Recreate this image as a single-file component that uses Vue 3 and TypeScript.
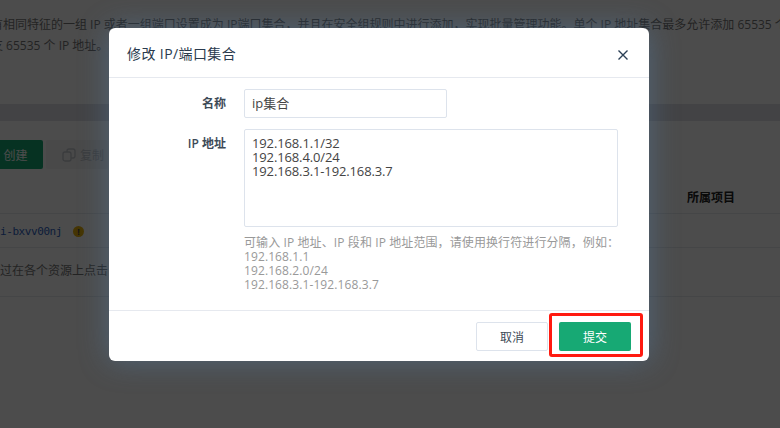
<script setup lang="ts">
const ipText = "192.168.1.1/32\n192.168.4.0/24\n192.168.3.1-192.168.3.7";
const hints = ["192.168.1.1", "192.168.2.0/24", "192.168.3.1-192.168.3.7"];
</script>

<template>
  <div class="screen">
    <div class="page">
      <div class="desc">
        <p class="line-one">有相同特征的一组 IP 或者一组端口设置成为 IP端口集合，并且在安全组规则中进行添加，实现批量管理功能。单个 IP 地址集合最多允许添加 65535 个</p>
        <p class="line-two">支 65535 个 IP 地址。</p>
      </div>
      <div class="strip"></div>
      <div class="toolbar">
        <button class="create">创建</button>
        <button class="copy">
          <svg width="14" height="14" viewBox="0 0 14 14" fill="none" stroke="currentColor" stroke-width="1.3">
            <rect x="1" y="4" width="8" height="9" rx="2" />
            <path d="M5 4V3a2 2 0 0 1 2-2h4a2 2 0 0 1 2 2v5a2 2 0 0 1-2 2H9" />
          </svg>
          复制
        </button>
      </div>
      <div class="thead"><span class="th-project">所属项目</span></div>
      <div class="row-id">
        <span class="mono">i-bxvv00nj</span>
        <span class="warn">!</span>
      </div>
      <div class="row-tip">过在各个资源上点击</div>
    </div>

    <div class="overlay">
      <div class="modal">
        <header class="modal-head">
          <h2>修改 IP/端口集合</h2>
          <svg class="close" width="10" height="10" viewBox="0 0 10 10" stroke="#2a3f55" stroke-width="1.4">
            <path d="M.5.5l9 9M9.5.5l-9 9" />
          </svg>
        </header>
        <div class="modal-body">
          <div class="field">
            <label>名称</label>
            <div class="input">ip集合</div>
          </div>
          <div class="field field-ip">
            <label>IP 地址</label>
            <div class="ip-col">
              <div class="textarea">{{ ipText }}</div>
              <div class="hint">
                <div>可输入 IP 地址、IP 段和 IP 地址范围，请使用换行符进行分隔，例如：</div>
                <div v-for="h in hints" :key="h">{{ h }}</div>
              </div>
            </div>
          </div>
        </div>
        <footer class="modal-foot">
          <button class="cancel">取消</button>
          <span class="submit-mark"><button class="submit">提交</button></span>
        </footer>
      </div>
    </div>
  </div>
</template>

<style scoped>
.screen {
  position: relative;
  width: 780px;
  height: 428px;
  overflow: hidden;
  font-family: "Open Sans", "Noto Sans CJK SC", sans-serif;
  font-size: 12px;
  color: #333;
  background: #fff;
}
.page {
  height: 428px;
}
.desc {
  height: 104px;
  padding-top: 16px;
  box-sizing: border-box;
  white-space: nowrap;
  overflow: hidden;
}
.desc p {
  margin: 0 0 3px;
  line-height: 18px;
  font-size: 12px;
  color: #777;
}
.line-one {
  margin-left: -9px !important;
}
.line-two {
  margin-left: -9px !important;
}
.strip {
  height: 17px;
  background: #e0e2e6;
}
.toolbar {
  display: flex;
  gap: 3px;
  padding-top: 19px;
  height: 29px;
  margin-left: -20px;
}
.toolbar button {
  height: 29px;
  border: 0;
  border-radius: 2px;
  font: inherit;
  display: flex;
  align-items: center;
  justify-content: center;
  gap: 4px;
  white-space: nowrap;
}
.create {
  width: 63px;
  padding-left: 14px;
  background: #17a974;
  color: #fff;
}
.toolbar .copy {
  width: 62px;
  padding: 0 0 0 16px;
  justify-content: flex-start;
  background: #f3f4f6;
  color: #c3c7cc;
}
.thead {
  height: 45px;
  box-sizing: border-box;
  border-bottom: 1px solid #e8eaee;
  padding-top: 20px;
  padding-left: 687px;
  font-weight: 600;
  color: #222;
  line-height: 18px;
}
.row-id {
  height: 34px;
  box-sizing: border-box;
  border-bottom: 1px solid #e8eaee;
  display: flex;
  align-items: center;
  gap: 11px;
  padding-top: 2px;
}
.mono {
  font-family: "DejaVu Sans Mono", monospace;
  font-size: 11px;
  letter-spacing: -0.42px;
  color: #2d5fbf;
}
.warn {
  width: 11px;
  height: 11px;
  border-radius: 50%;
  background: #e8b10c;
  color: #4c4c4c;
  font-size: 9px;
  line-height: 11px;
  font-weight: 700;
  text-align: center;
}
.row-tip {
  height: 49px;
  box-sizing: border-box;
  border-bottom: 1px solid #e8eaee;
  padding-top: 14px;
  line-height: 18px;
  color: #777;
}
.overlay {
  position: absolute;
  inset: 0;
  background: rgba(0, 0, 0, 0.7);
  padding: 28px 0 0 109px;
  box-sizing: border-box;
}
.modal {
  width: 540px;
  height: 333px;
  background: #fff;
  border-radius: 6px;
  box-shadow: 0 0 30px rgba(88, 130, 172, 0.48);
  display: flex;
  flex-direction: column;
}
.modal-head {
  height: 50px;
  box-sizing: border-box;
  border-bottom: 1px solid #e6e9ef;
  display: flex;
  align-items: center;
  justify-content: space-between;
  padding: 0 21px 0 18px;
}
.modal-head h2 {
  margin: 0;
  font-size: 14px;
  font-weight: 400;
  letter-spacing: 0.4px;
  color: #2a3a4d;
}
.close {
  margin-top: 4px;
}
.modal-body {
  flex: 1;
  padding-top: 11px;
}
.field {
  display: flex;
  gap: 18px;
}
.field label {
  width: 117px;
  text-align: right;
  font-size: 12px;
  font-weight: 600;
  color: #3d4a57;
  line-height: 29px;
}
.input {
  width: 203px;
  height: 29px;
  box-sizing: border-box;
  border: 1px solid #dde3ec;
  border-radius: 2px;
  padding: 0 7px;
  line-height: 27px;
  color: #444;
  font-size: 13px;
}
.field-ip {
  margin-top: 11px;
}
.ip-col {
  width: 374px;
}
.textarea {
  height: 98px;
  box-sizing: border-box;
  border: 1px solid #dde3ec;
  border-radius: 2px;
  padding: 6px 7px;
  font-size: 13px;
  line-height: 14px;
  letter-spacing: -0.13px;
  color: #444;
  white-space: pre;
}
.hint {
  margin-top: 9px;
  font-size: 12px;
  line-height: 14px;
  letter-spacing: 0.1px;
  color: #999;
  white-space: nowrap;
}
.modal-foot {
  height: 51px;
  box-sizing: border-box;
  border-top: 1px solid #e6e9ef;
  display: flex;
  justify-content: flex-end;
  align-items: flex-start;
  padding: 11px 18px 0 0;
  gap: 11px;
}
.modal-foot button {
  width: 72px;
  height: 29px;
  border-radius: 2px;
  font: inherit;
  font-size: 12px;
}
.cancel {
  background: #fff;
  border: 1px solid #dde3ec;
  color: #3d4a57;
}
.submit {
  background: #17a974;
  border: 0;
  color: #fff;
  display: block;
}
.submit-mark {
  display: block;
  position: relative;
}
.submit-mark::after {
  content: "";
  position: absolute;
  inset: -9px -12px -6px -10px;
  border: 3px solid #ff1a10;
  border-radius: 3px;
  pointer-events: none;
}
</style>

<style>
html,
body {
  margin: 0;
  background: #fff;
}
</style>
